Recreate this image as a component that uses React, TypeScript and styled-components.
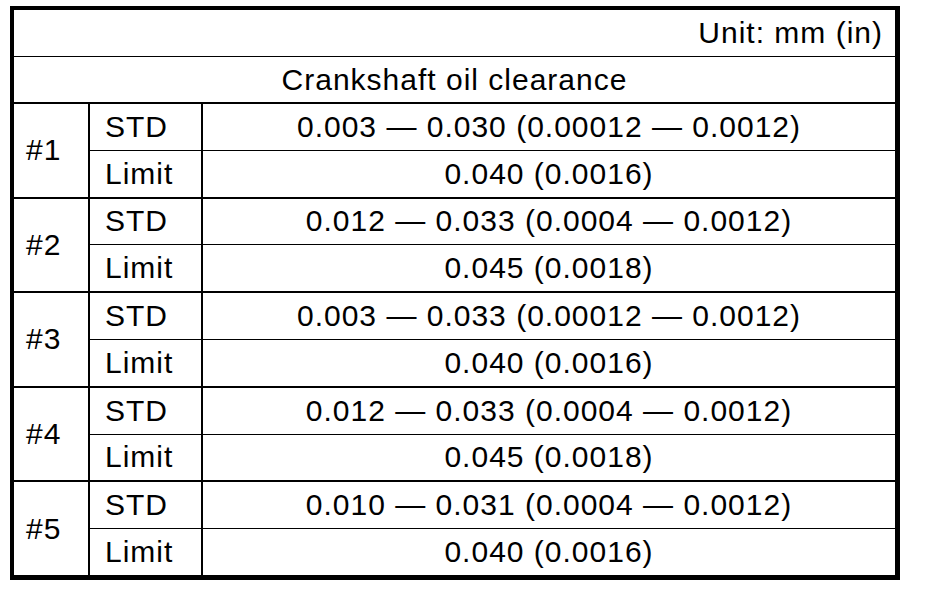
import React from "react";
import styled, { createGlobalStyle } from "styled-components";

const GlobalStyle = createGlobalStyle`
  html, body {
    margin: 0;
    padding: 0;
    background: #ffffff;
  }
  body {
    font-family: "Liberation Sans", Arial, sans-serif;
    color: #000000;
  }
`;

const Frame = styled.div`
  box-sizing: border-box;
  margin: 6px 0 0 10px;
  width: 890px;
  height: 574px;
  border-style: solid;
  border-color: #000;
  border-width: 4px 5px 5px 4px;
  display: flex;
  flex-direction: column;
  font-size: 30px;
  letter-spacing: 1px;
  line-height: 1;
`;

const UnitRow = styled.div`
  height: 46px;
  flex: none;
  border-bottom: 1px solid #000;
  display: flex;
  align-items: center;
  justify-content: flex-end;
  padding-right: 12px;
`;

const TitleRow = styled.div`
  height: 45px;
  flex: none;
  border-bottom: 2px solid #000;
  display: flex;
  align-items: center;
  justify-content: center;
`;

const Body = styled.div`
  flex: 1;
  display: flex;
  flex-direction: column;
`;

const Group = styled.div<{ $last: boolean }>`
  flex: 1;
  display: flex;
  border-bottom: ${(p) => (p.$last ? "none" : "2px solid #000")};
`;

const NumCell = styled.div`
  box-sizing: border-box;
  width: 76px;
  flex: none;
  border-right: 2px solid #000;
  padding-left: 12px;
  display: flex;
  align-items: center;
`;

const SubRows = styled.div`
  flex: 1;
  display: flex;
  flex-direction: column;
`;

const SubRow = styled.div<{ $first: boolean }>`
  flex: 1;
  display: flex;
  border-bottom: ${(p) => (p.$first ? "1px solid #000" : "none")};
`;

const LabelCell = styled.div`
  box-sizing: border-box;
  width: 113px;
  flex: none;
  border-right: 2px solid #000;
  padding-left: 15px;
  display: flex;
  align-items: center;
`;

const ValueCell = styled.div`
  flex: 1;
  display: flex;
  align-items: center;
  justify-content: center;
`;

type Entry = { num: string; std: string; limit: string };

const data: Entry[] = [
  { num: "#1", std: "0.003 — 0.030 (0.00012 — 0.0012)", limit: "0.040 (0.0016)" },
  { num: "#2", std: "0.012 — 0.033 (0.0004 — 0.0012)", limit: "0.045 (0.0018)" },
  { num: "#3", std: "0.003 — 0.033 (0.00012 — 0.0012)", limit: "0.040 (0.0016)" },
  { num: "#4", std: "0.012 — 0.033 (0.0004 — 0.0012)", limit: "0.045 (0.0018)" },
  { num: "#5", std: "0.010 — 0.031 (0.0004 — 0.0012)", limit: "0.040 (0.0016)" },
];

export default function App() {
  return (
    <>
      <GlobalStyle />
      <Frame>
        <UnitRow>Unit: mm (in)</UnitRow>
        <TitleRow>Crankshaft oil clearance</TitleRow>
        <Body>
          {data.map((d, i) => (
            <Group key={d.num} $last={i === data.length - 1}>
              <NumCell>{d.num}</NumCell>
              <SubRows>
                <SubRow $first={true}>
                  <LabelCell>STD</LabelCell>
                  <ValueCell>{d.std}</ValueCell>
                </SubRow>
                <SubRow $first={false}>
                  <LabelCell>Limit</LabelCell>
                  <ValueCell>{d.limit}</ValueCell>
                </SubRow>
              </SubRows>
            </Group>
          ))}
        </Body>
      </Frame>
    </>
  );
}
